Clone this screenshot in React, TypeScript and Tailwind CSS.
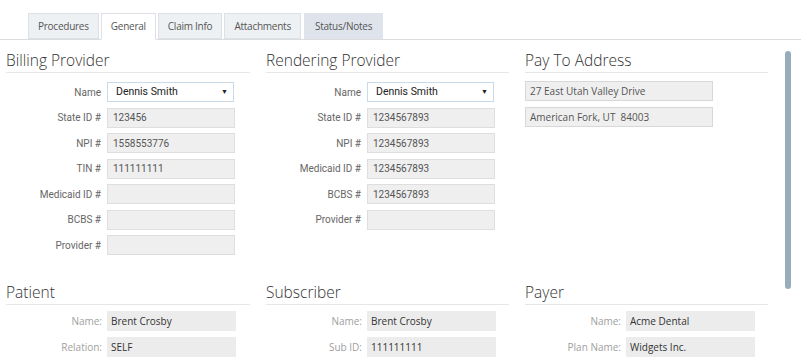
import React from "react";

const tabs = ["Procedures", "General", "Claim Info", "Attachments", "Status/Notes"];

const billing = [
  { label: "State ID #", value: "123456" },
  { label: "NPI #", value: "1558553776" },
  { label: "TIN #", value: "111111111" },
  { label: "Medicaid ID #", value: "" },
  { label: "BCBS #", value: "" },
  { label: "Provider #", value: "" },
];

const rendering = [
  { label: "State ID #", value: "1234567893" },
  { label: "NPI #", value: "1234567893" },
  { label: "Medicaid ID #", value: "1234567893" },
  { label: "BCBS #", value: "1234567893" },
  { label: "Provider #", value: "" },
];

const Heading = ({ title, gap }: { title: string; gap: string }) => (
  <div className={`border-b border-[#e6e6e6] pb-[1px] ${gap}`}>
    <h2 className="text-[15.5px] leading-[22px] text-[#333] font-light font-['Open_Sans',sans-serif]">
      {title}
    </h2>
  </div>
);

const NameSelect = () => (
  <div className="flex items-center h-[20px]">
    <span className="w-[101px] pr-[6px] text-right text-[10px] text-[#666]">Name</span>
    <div className="w-[127px] h-[20px] border border-[#c9dae8] bg-white flex items-center justify-between pl-[8px] pr-[5px]">
      <span className="text-[10.5px] text-[#222]">Dennis Smith</span>
      <span className="text-[7px] text-[#222]">▼</span>
    </div>
  </div>
);

const Field = ({ label, value }: { label: string; value: string }) => (
  <div className="flex items-center h-[20px]">
    <span className="w-[101px] pr-[6px] text-right text-[10px] text-[#666] whitespace-nowrap">{label}</span>
    <div className="w-[128px] h-[20px] border border-[#dedede] bg-[#efefef] flex items-center pl-[5px] text-[10px] text-[#555]">
      {value}
    </div>
  </div>
);

const Provider = ({ title, rows }: { title: string; rows: { label: string; value: string }[] }) => (
  <div>
    <Heading title={title} gap="mb-[9px]" />
    <div className="flex flex-col gap-[5.5px] font-['Roboto',sans-serif]">
      <NameSelect />
      {rows.map((r) => (
        <Field key={r.label} label={r.label} value={r.value} />
      ))}
    </div>
  </div>
);

const InfoRow = ({ label, value }: { label: string; value: string }) => (
  <div className="flex items-center h-[20px]">
    <span className="w-[101px] pr-[5px] text-right text-[10px] text-[#a0a0a0]">{label}</span>
    <div className="w-[129px] h-[20px] bg-[#ececec] flex items-center pl-[4px] text-[10px] text-[#333]">{value}</div>
  </div>
);

const Info = ({ title, rows }: { title: string; rows: { label: string; value: string }[] }) => (
  <div>
    <Heading title={title} gap="mb-[6px]" />
    <div className="flex flex-col gap-[6px] font-['Open_Sans',sans-serif]">
      {rows.map((r) => (
        <InfoRow key={r.label} label={r.label} value={r.value} />
      ))}
    </div>
  </div>
);

const App = () => {
  return (
    <div className="relative w-[801px] h-[364px] bg-white overflow-hidden font-['Open_Sans',sans-serif]">
      {/* Tabs */}
      <div className="flex items-end gap-[2px] pl-[28px] pt-[13px] border-b border-[#dcdcdc] h-[40px]">
        {tabs.map((t) => {
          const active = t === "General";
          const status = t === "Status/Notes";
          return (
            <div
              key={t}
              className={`h-[26px] px-[9px] flex items-center text-[10px] tracking-[-0.25px] text-[#555] border border-[#dde1e5] ${
                active
                  ? "bg-white border-b-white -mb-[1px] h-[27px]"
                  : status
                  ? "bg-[#dfe4ec] border-[#dfe4ec] ml-[1px] px-[10px]"
                  : "bg-[#eef1f4]"
              }`}
            >
              {t}
            </div>
          );
        })}
      </div>

      {/* Top section */}
      <div className="grid grid-cols-[244px_243px_243px] gap-x-[16px] pl-[6px] pt-[9px]">
        <Provider title="Billing Provider" rows={billing} />
        <Provider title="Rendering Provider" rows={rendering} />
        <div>
          <Heading title="Pay To Address" gap="mb-[8px]" />
          <div className="flex flex-col gap-[6px]">
            <div className="w-[188px] h-[20px] border border-[#d8d8d8] bg-[#efefef] flex items-center pl-[4px] text-[10px] text-[#555]">
              27 East Utah Valley Drive
            </div>
            <div className="w-[188px] h-[20px] border border-[#d8d8d8] bg-[#efefef] flex items-center pl-[4px] text-[10px] text-[#555]">
              American Fork, UT&nbsp; 84003
            </div>
          </div>
        </div>
      </div>

      {/* Bottom section */}
      <div className="grid grid-cols-[244px_243px_243px] gap-x-[16px] pl-[6px] pt-[26px]">
        <Info
          title="Patient"
          rows={[
            { label: "Name:", value: "Brent Crosby" },
            { label: "Relation:", value: "SELF" },
          ]}
        />
        <Info
          title="Subscriber"
          rows={[
            { label: "Name:", value: "Brent Crosby" },
            { label: "Sub ID:", value: "111111111" },
          ]}
        />
        <Info
          title="Payer"
          rows={[
            { label: "Name:", value: "Acme Dental" },
            { label: "Plan Name:", value: "Widgets Inc." },
          ]}
        />
      </div>

      {/* Scrollbar thumb */}
      <div className="absolute left-[785px] top-[51px] w-[6px] h-[238px] rounded-[3px] bg-[#98adbb]" />
    </div>
  );
};

export default App;
